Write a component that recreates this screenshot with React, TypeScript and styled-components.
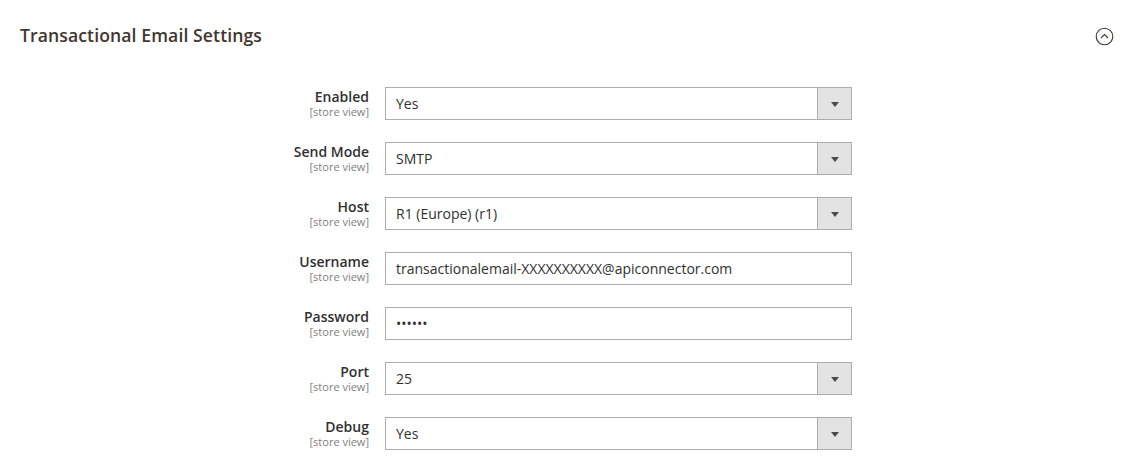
import { Fragment } from 'react'
import styled, { createGlobalStyle } from 'styled-components'

const Global = createGlobalStyle`
  body {
    margin: 0;
    background: #fff;
    font-family: 'Open Sans', 'Liberation Sans', sans-serif;
    color: #303030;
  }
`

const Section = styled.section`
  padding: 0 26px 0 20px;
`

const Header = styled.div`
  display: flex;
  align-items: center;
  justify-content: space-between;
  height: 71px;
`

const Title = styled.h2`
  margin: 0 0 1px;
  font-size: 17.6px;
  font-weight: 600;
  color: #41362f;
  letter-spacing: 0.1px;
`

const Collapse = styled.button`
  border: 0;
  background: none;
  padding: 0;
  width: 19px;
  height: 19px;
  display: flex;
  margin-top: 2px;
  cursor: pointer;
`

const Form = styled.div`
  display: grid;
  grid-template-columns: 349px 467px;
  column-gap: 16px;
  row-gap: 22px;
  margin-top: 16px;
`

const Label = styled.label`
  text-align: right;
  display: flex;
  flex-direction: column;
  align-items: flex-end;
  padding-top: 1px;
`

const LabelText = styled.span`
  font-size: 14px;
  line-height: 18px;
  font-weight: 600;
  color: #303030;
`

const Scope = styled.span`
  font-size: 11px;
  line-height: 11px;
  color: #808080;
`

const Box = styled.div`
  display: flex;
  height: 33px;
  box-sizing: border-box;
  border: 1px solid #adadad;
  background: #fff;
`

const Field = styled.input`
  flex: 1;
  min-width: 0;
  border: 0;
  outline: 0;
  padding: 0 10px;
  font-family: inherit;
  font-size: 14px;
  color: #303030;
  background: transparent;
`

const NativeSelect = styled.select`
  flex: 1;
  appearance: none;
  border: 0;
  outline: 0;
  padding: 0 10px;
  font-family: inherit;
  font-size: 14px;
  color: #303030;
  background: transparent;
`

const Toggle = styled.span`
  width: 33px;
  border-left: 1px solid #adadad;
  background: #e3e3e3;
  display: flex;
  align-items: center;
  justify-content: center;
  pointer-events: none;
`

const Arrow = styled.span`
  width: 0;
  height: 0;
  border-left: 4px solid transparent;
  border-right: 4px solid transparent;
  border-top: 5px solid #514943;
  margin-top: 1px;
`

type Row = { label: string; kind: 'select' | 'text' | 'password'; value: string }

const rows: Row[] = [
  { label: 'Enabled', kind: 'select', value: 'Yes' },
  { label: 'Send Mode', kind: 'select', value: 'SMTP' },
  { label: 'Host', kind: 'select', value: 'R1 (Europe) (r1)' },
  { label: 'Username', kind: 'text', value: 'transactionalemail-XXXXXXXXXX@apiconnector.com' },
  { label: 'Password', kind: 'password', value: '123456' },
  { label: 'Port', kind: 'select', value: '25' },
  { label: 'Debug', kind: 'select', value: 'Yes' },
]

const App = () => {
  return (
    <Section>
      <Global />
      <Header>
        <Title>Transactional Email Settings</Title>
        <Collapse aria-label="Collapse">
          <svg width="19" height="19" viewBox="0 0 19 19">
            <circle cx="9.5" cy="9.5" r="8.3" fill="none" stroke="#41362f" strokeWidth="1.1" />
            <path d="M6 11 L9.5 7.6 L13 11" fill="none" stroke="#41362f" strokeWidth="1.1" />
          </svg>
        </Collapse>
      </Header>
      <Form>
        {rows.map((r) => (
          <Fragment key={r.label}>
            <Label>
              <LabelText>{r.label}</LabelText>
              <Scope>[store view]</Scope>
            </Label>
            <Box>
              {r.kind === 'select' ? (
                <>
                  <NativeSelect defaultValue={r.value}>
                    <option>{r.value}</option>
                  </NativeSelect>
                  <Toggle>
                    <Arrow />
                  </Toggle>
                </>
              ) : (
                <Field type={r.kind} defaultValue={r.value} />
              )}
            </Box>
          </Fragment>
        ))}
      </Form>
    </Section>
  )
}

export default App
